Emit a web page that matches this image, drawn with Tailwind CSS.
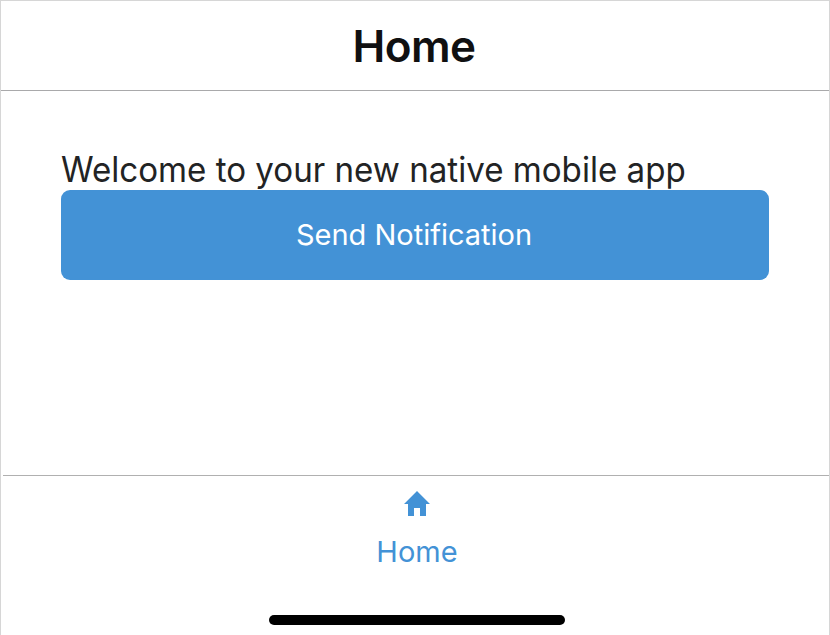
<!DOCTYPE html>
<html lang="en"><head><meta charset="utf-8"><title>Home</title>
<script src="https://cdn.jsdelivr.net/npm/@tailwindcss/browser@4"></script></head>
<body class="bg-white">
<div class="w-[830px] h-[635px] border border-b-0 border-[#d6d6d6] flex flex-col overflow-hidden font-['Inter',sans-serif] text-[#222324]">
<header class="h-[90px] shrink-0 border-b border-[#a9a9ab] flex items-center justify-center"><h1 class="text-[44px] leading-[50px] font-semibold text-[#101011] tracking-[-0.6px] whitespace-nowrap pr-[2px]">Home</h1></header>
<main class="h-[384px] shrink-0 px-[60px] pt-[57px]">
<p class="text-[35px] leading-[42px] whitespace-nowrap"><span class="inline-block origin-left scale-x-[0.946]">Welcome to your new native mobile app</span></p>
<button class="block w-full h-[90px] rounded-[9px] bg-[#4392d6] text-white text-[29px] pr-[2px]">Send Notification</button>
</main>
<nav class="grow ml-[2px] border-t border-[#b0b0b0] flex flex-col items-center pl-[2px] text-[#4392d6]">
<svg class="mt-[15px] w-[26px] h-[26px] shrink-0" viewBox="0 0 26 26" fill="currentColor"><path d="M13 0 26 13H22V25H16V17H10V25H4V13H0Z"/></svg>
<span class="mt-[17px] text-[29px] leading-[36px]">Home</span>
<div class="mt-[45px] w-[296px] h-[10px] shrink-0 rounded-full bg-black"></div>
</nav>
</div></body></html>
